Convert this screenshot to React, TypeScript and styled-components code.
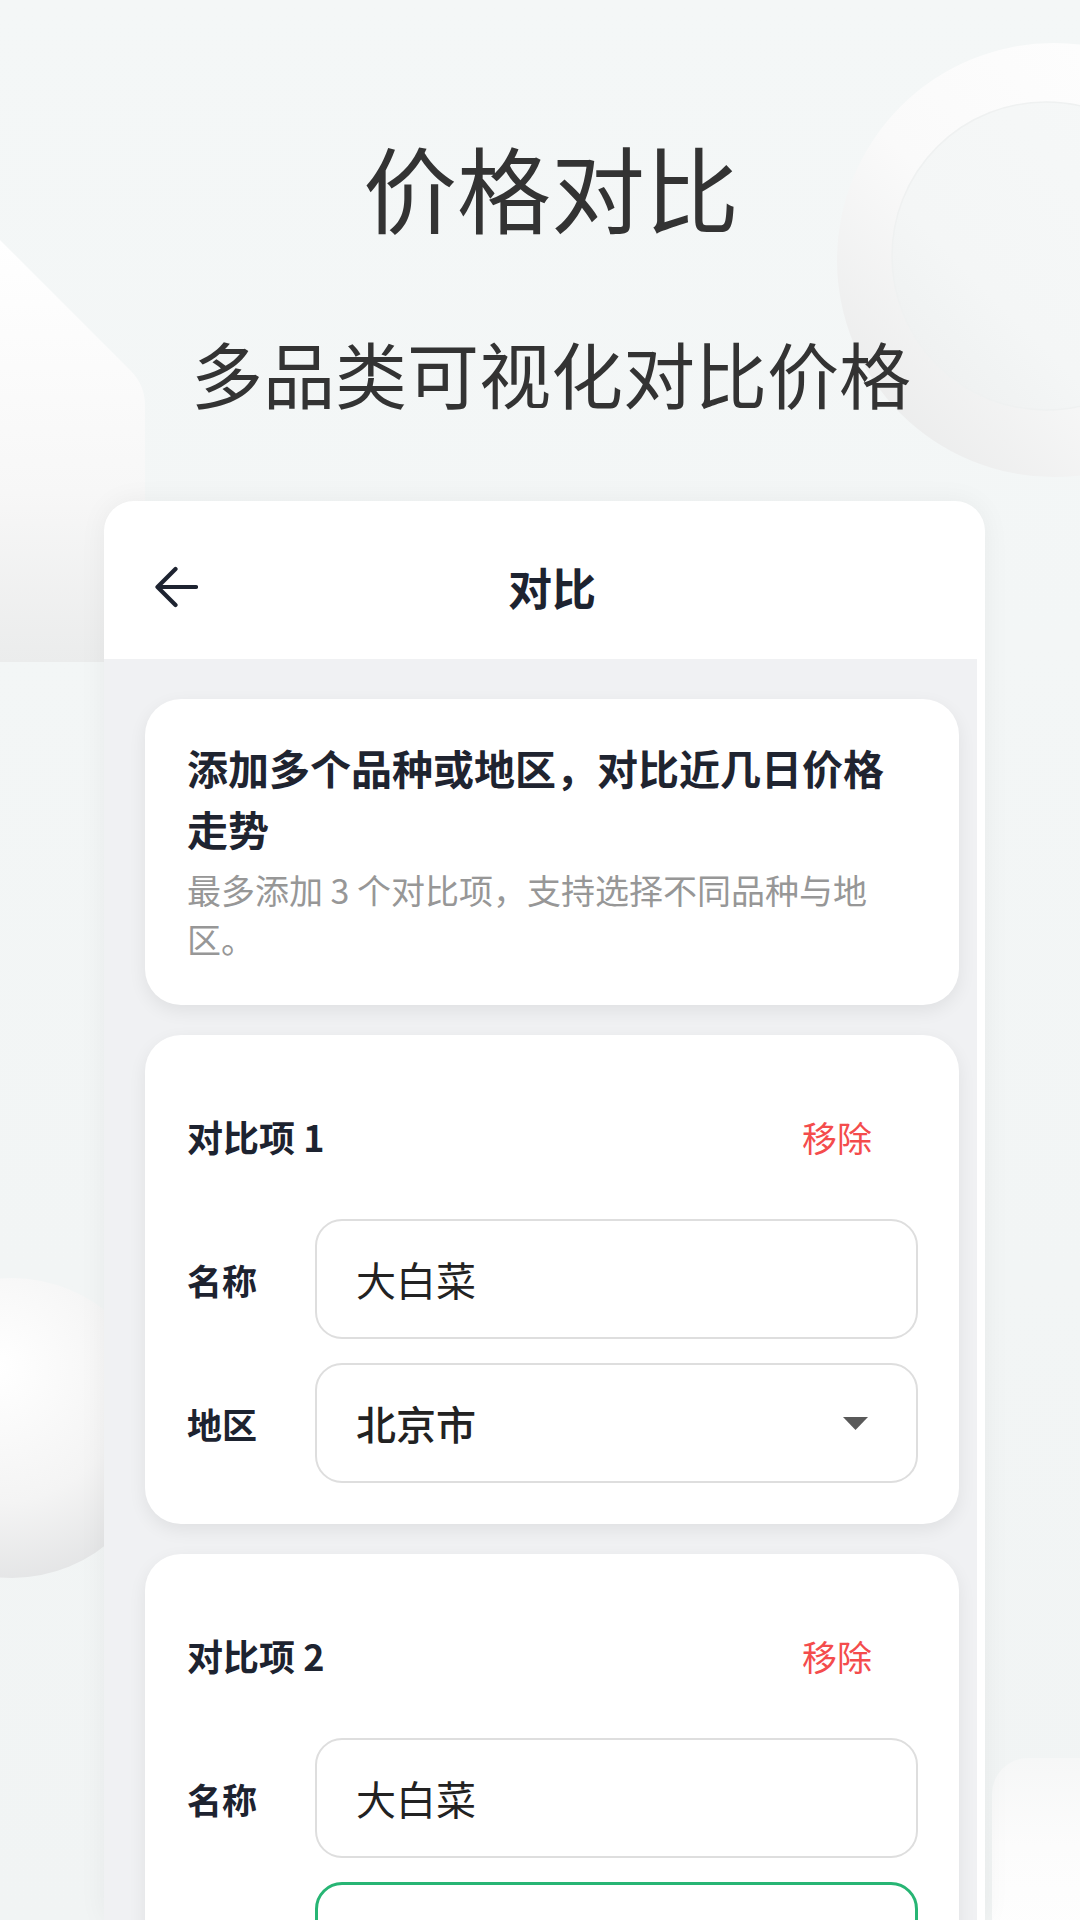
import React from "react";
import styled, { createGlobalStyle } from "styled-components";

const Global = createGlobalStyle`
  html, body { margin: 0; padding: 0; }
  body {
    width: 1080px;
    height: 1920px;
    overflow: hidden;
    background: #f2f5f5;
    font-family: "Noto Sans CJK SC", "Noto Sans", sans-serif;
  }
  * { box-sizing: border-box; }
`;

const Page = styled.div`
  position: relative;
  width: 1080px;
  height: 1920px;
  overflow: hidden;
  background: linear-gradient(180deg, #f4f7f7 0%, #f1f4f4 100%);
  display: flex;
  flex-direction: column;
`;

const Backdrop = styled.svg`
  position: absolute;
  left: 0;
  top: 0;
  z-index: 0;
`;

const Hero = styled.header`
  position: relative;
  z-index: 1;
  display: flex;
  flex-direction: column;
  align-items: center;
  gap: 86px;
  padding: 130px 0 86px 22px;
`;

const HeroTitle = styled.h1`
  margin: 0;
  font-size: 94px;
  line-height: 113px;
  font-weight: 400;
  color: #333333;
`;

const HeroSub = styled.p`
  margin: 0;
  font-size: 72px;
  line-height: 86px;
  font-weight: 400;
  color: #333333;
`;

const Phone = styled.section`
  position: relative;
  z-index: 1;
  margin-left: 104px;
  width: 881px;
  flex: 1;
  background: #ffffff;
  border-radius: 30px 30px 0 0;
  box-shadow: 0 0 28px rgba(0, 0, 0, 0.05);
  display: flex;
  flex-direction: column;
  overflow: hidden;
`;

const NavBar = styled.div`
  height: 158px;
  flex-shrink: 0;
  padding: 14px 34px 0 49px;
  display: grid;
  grid-template-columns: 1fr auto 1fr;
  align-items: center;
`;

const BackButton = styled.button`
  justify-self: start;
  width: 46px;
  height: 44px;
  padding: 0;
  border: none;
  background: none;
  color: #1d2330;
  display: flex;
  align-items: center;
  justify-content: center;
`;

const NavTitle = styled.div`
  font-size: 44px;
  font-weight: 700;
  color: #1d2330;
  line-height: 1;
`;

const Content = styled.div`
  flex: 1;
  margin-right: 8px;
  background: #f0f1f3;
  padding: 40px 18px 0 41px;
  display: flex;
  flex-direction: column;
  gap: 30px;
`;

const Card = styled.div`
  background: #ffffff;
  border-radius: 36px;
  box-shadow: 0 6px 18px rgba(0, 0, 0, 0.07);
`;

const InfoCard = styled(Card)`
  padding: 38px 67px 42px 42px;
`;

const InfoTitle = styled.div`
  font-size: 41px;
  line-height: 61px;
  font-weight: 700;
  color: #1f2430;
`;

const InfoNote = styled.div`
  margin-top: 6px;
  font-size: 34px;
  line-height: 49px;
  font-weight: 400;
  color: #979797;
`;

const ItemCard = styled(Card)`
  padding: 42px 41px 41px 42px;
  display: flex;
  flex-direction: column;
  gap: 24px;
  flex-shrink: 0;
`;

const ItemHead = styled.div`
  height: 118px;
  display: flex;
  align-items: center;
  justify-content: space-between;
`;

const ItemTitle = styled.div`
  font-size: 36px;
  font-weight: 700;
  color: #1d2330;
`;

const RemoveButton = styled.button`
  margin-right: 46px;
  padding: 0;
  border: none;
  background: none;
  font-family: inherit;
  font-size: 35px;
  font-weight: 400;
  color: #f44c4c;
`;

const FieldRow = styled.div`
  display: flex;
  align-items: center;
`;

const FieldLabel = styled.div`
  width: 128px;
  flex-shrink: 0;
  font-size: 35px;
  font-weight: 700;
  color: #1d2330;
`;

const Field = styled.div<{ $active?: boolean }>`
  flex: 1;
  height: 120px;
  border: ${(p) => (p.$active ? "3px solid #27b574" : "2px solid #dedede")};
  border-radius: 27px;
  padding: 0 48px 0 39px;
  display: flex;
  align-items: center;
  justify-content: space-between;
  background: #ffffff;
`;

const FieldValue = styled.span<{ $strong?: boolean }>`
  font-size: 40px;
  font-weight: ${(p) => (p.$strong ? 500 : 400)};
  color: #222222;
`;

const Caret = () => (
  <svg width="25" height="13" viewBox="0 0 25 13">
    <polygon points="0,0 25,0 12.5,13" fill="#595959" />
  </svg>
);

const BackArrow = () => (
  <svg width="44" height="42" viewBox="0 0 44 42" fill="none">
    <path
      d="M42 21H4M21.5 3L3.5 21l18 18"
      stroke="currentColor"
      strokeWidth="4.2"
      strokeLinecap="round"
      strokeLinejoin="round"
    />
  </svg>
);

const Decorations = () => (
  <Backdrop width="1080" height="1920" viewBox="0 0 1080 1920">
    <defs>
      <linearGradient id="ringG" x1="1" y1="0" x2="0" y2="1">
        <stop offset="0" stopColor="#ffffff" />
        <stop offset="0.55" stopColor="#fafafa" />
        <stop offset="1" stopColor="#e6e7e7" />
      </linearGradient>
      <linearGradient id="innerG" x1="0" y1="1" x2="1" y2="0">
        <stop offset="0" stopColor="#eceeee" />
        <stop offset="0.35" stopColor="#f4f6f6" />
        <stop offset="1" stopColor="#f6f8f8" />
      </linearGradient>
      <linearGradient id="pentG" x1="0" y1="0" x2="0" y2="1">
        <stop offset="0" stopColor="#ffffff" />
        <stop offset="0.6" stopColor="#f7f7f7" />
        <stop offset="1" stopColor="#ebecec" />
      </linearGradient>
      <radialGradient id="sphereG" cx="0.45" cy="0.3" r="0.75">
        <stop offset="0" stopColor="#ffffff" />
        <stop offset="0.6" stopColor="#f4f4f4" />
        <stop offset="1" stopColor="#e2e3e4" />
      </radialGradient>
      <linearGradient id="blobG" x1="0" y1="0" x2="0" y2="1">
        <stop offset="0" stopColor="#f6f7f7" />
        <stop offset="0.4" stopColor="#fcfcfc" />
        <stop offset="1" stopColor="#ffffff" />
      </linearGradient>
    </defs>
    <circle cx="1054" cy="260" r="217" fill="url(#ringG)" />
    <circle cx="1046" cy="256" r="154" fill="url(#innerG)" stroke="#eff1f1" strokeWidth="1.5" />
    <path d="M0 240 L130 370 Q145 385 145 405 L145 662 L0 662 Z" fill="url(#pentG)" />
    <circle cx="12" cy="1428" r="150" fill="url(#sphereG)" />
    <rect x="992" y="1758" width="140" height="220" rx="36" fill="url(#blobG)" />
  </Backdrop>
);

type Item = { idx: number; name: string; region: string; activeRegion?: boolean };

const items: Item[] = [
  { idx: 1, name: "大白菜", region: "北京市" },
  { idx: 2, name: "大白菜", region: "", activeRegion: true },
];

export default function App() {
  return (
    <>
      <Global />
      <Page>
        <Decorations />
        <Hero>
          <HeroTitle>价格对比</HeroTitle>
          <HeroSub>多品类可视化对比价格</HeroSub>
        </Hero>
        <Phone>
          <NavBar>
            <BackButton aria-label="返回">
              <BackArrow />
            </BackButton>
            <NavTitle>对比</NavTitle>
            <span />
          </NavBar>
          <Content>
            <InfoCard>
              <InfoTitle>添加多个品种或地区，对比近几日价格走势</InfoTitle>
              <InfoNote>最多添加 3 个对比项，支持选择不同品种与地区。</InfoNote>
            </InfoCard>
            {items.map((it) => (
              <ItemCard key={it.idx}>
                <ItemHead>
                  <ItemTitle>对比项 {it.idx}</ItemTitle>
                  <RemoveButton>移除</RemoveButton>
                </ItemHead>
                <FieldRow>
                  <FieldLabel>名称</FieldLabel>
                  <Field>
                    <FieldValue>{it.name}</FieldValue>
                  </Field>
                </FieldRow>
                <FieldRow>
                  {it.region ? <FieldLabel>地区</FieldLabel> : <FieldLabel aria-hidden />}
                  <Field $active={it.activeRegion}>
                    <FieldValue $strong>{it.region}</FieldValue>
                    <Caret />
                  </Field>
                </FieldRow>
              </ItemCard>
            ))}
          </Content>
        </Phone>
      </Page>
    </>
  );
}
